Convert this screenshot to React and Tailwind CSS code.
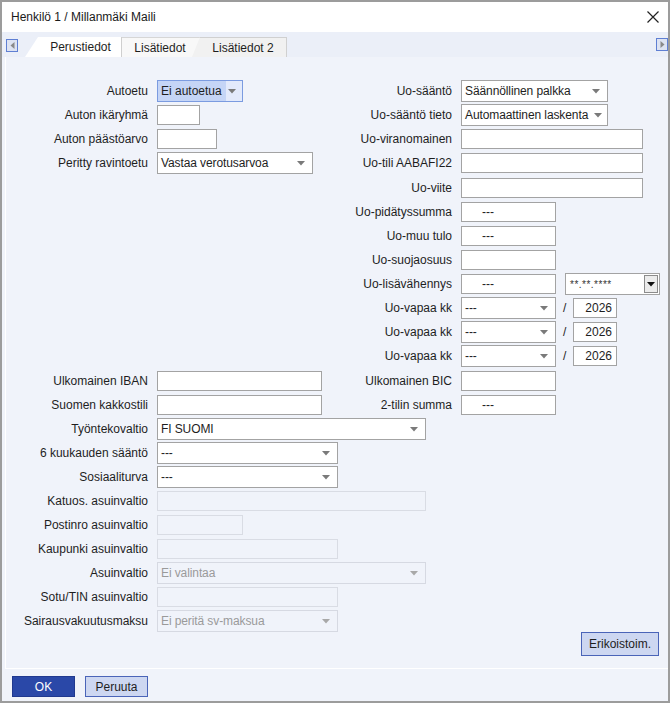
import React from "react";

function Arrow({ color = "#7a7a7a" }) {
  return (
    <svg width="8" height="5" viewBox="0 0 8 5" className="shrink-0">
      <path d="M0 0 L8 0 L4 4.5 Z" fill={color} />
    </svg>
  );
}

function Input({ w, value, pad = "pl-[3px]", right, disabled }) {
  return (
    <div
      className={
        "shrink-0 h-[20px] border flex items-center text-[12px] leading-none " +
        w +
        " " +
        (disabled ? "border-[#d9dce4] bg-[#f0f3fa] text-[#9a9a9a] " : "border-[#a3a3a3] bg-white text-[#1e1e1e] ") +
        (right ? "justify-end pr-[4px]" : pad)
      }
    >
      {value}
    </div>
  );
}

function Select({ w, value, disabled, highlight, pr = "pr-[7px]" }) {
  if (highlight) {
    return (
      <div className={"shrink-0 h-[22px] border border-[#7b9be0] bg-[#e3eafb] flex items-center " + w}>
        <div className="h-full flex items-center bg-[#c5d5f6] pl-[3px] pr-[4px] text-[12px] text-[#1e1e1e]">{value}</div>
        <div className="flex-1 flex justify-end pr-[6px]">
          <Arrow />
        </div>
      </div>
    );
  }
  return (
    <div
      className={
        "shrink-0 h-[22px] border flex items-center justify-between gap-[3px] pl-[3px] text-[12px] " +
        pr +
        " " +
        w +
        " " +
        (disabled ? "border-[#d6d9e2] bg-[#f0f3fa] text-[#9a9a9a]" : "border-[#a3a3a3] bg-white text-[#1e1e1e]")
      }
    >
      <span className="whitespace-nowrap tracking-[-0.1px]">{value}</span>
      <Arrow color={disabled ? "#a8a8a8" : "#7a7a7a"} />
    </div>
  );
}

function DateSelect() {
  return (
    <div className="shrink-0 ml-[9px] w-[95px] h-[22px] border border-[#a3a3a3] bg-white flex items-center justify-between pl-[4px] pr-[1px]">
      <span className="text-[10px] text-[#333] tracking-[0.5px]">**.**.****</span>
      <div className="w-[14px] h-[18px] border border-[#8c8c8c] bg-[#ececec] flex items-center justify-center">
        <svg width="8" height="5" viewBox="0 0 8 5">
          <path d="M0 0 L8 0 L4 4.5 Z" fill="#111" />
        </svg>
      </div>
    </div>
  );
}

function Row({ label, children, rlabel, rchildren, extra = "" }) {
  return (
    <div className={"flex h-[24px] items-center shrink-0 " + extra}>
      <div className="w-[142px] text-right whitespace-nowrap">{label}</div>
      <div className="ml-[9px] w-[183px] flex items-center">{children}</div>
      {rlabel !== undefined && (
        <>
          <div className="w-[112px] text-right whitespace-nowrap">{rlabel}</div>
          <div className="ml-[9px] flex items-center">{rchildren}</div>
        </>
      )}
    </div>
  );
}

function VapaaRow() {
  return (
    <Row
      label=""
      rlabel="Uo-vapaa kk"
      rchildren={
        <>
          <Select w="w-[95px]" value="---" />
          <span className="ml-[7px] w-[3px] text-[12px]">/</span>
          <div className="ml-[7px]">
            <Input w="w-[44px]" value="2026" right />
          </div>
        </>
      }
    />
  );
}

export default function App() {
  return (
    <div className="w-[670px] h-[703px] border-2 border-[#9c9c9c] flex flex-col bg-[#f0f3fa] font-['Liberation_Sans',Arial,sans-serif] text-[12px] text-[#1e1e1e] overflow-hidden">
      {/* Title bar */}
      <div className="h-[30px] shrink-0 bg-white flex items-center justify-between pl-[9px] pr-[9px]">
        <span className="text-[12px] text-[#1a1a1a]">Henkilö 1 / Millanmäki Maili</span>
        <svg width="12" height="12" viewBox="0 0 12 12">
          <path d="M0.5 0.5 L11.5 11.5 M11.5 0.5 L0.5 11.5" stroke="#222" strokeWidth="1.2" />
        </svg>
      </div>

      {/* Tab bar */}
      <div className="h-[25px] shrink-0 bg-[#ebeff8] flex items-end relative">
        <div className="self-center mt-[2px] ml-[4px] w-[12px] h-[13px] border border-[#5f7fd3] bg-[#dde3f2] flex items-center justify-center">
          <svg width="5" height="7" viewBox="0 0 5 7">
            <path d="M4.5 0 L4.5 7 L0.5 3.5 Z" fill="#8a8a8a" />
          </svg>
        </div>
        <div className="ml-[7px] flex items-end h-[20px]">
          <div className="relative z-20 w-[97px] h-[20px] bg-white border-r border-[#cfcfcf] [clip-path:polygon(13px_0,100%_0,100%_100%,0_100%)] flex items-center justify-center pl-[15px]">
            Perustiedot
          </div>
          <div className="relative z-10 w-[78px] h-[20px] bg-[#f8f8f8] border-t border-[#d6d6d6] [clip-path:polygon(0_0,100%_0,calc(100%-8px)_100%,0_100%)] flex items-center justify-center pr-[2px]">
            Lisätiedot
          </div>
          <div className="-ml-[8px] w-[95px] h-[20px] bg-[#f1f1f1] border-t border-r border-[#d0d0d0] flex items-center justify-center pl-[8px]">
            Lisätiedot 2
          </div>
        </div>
        <div className="absolute right-0 top-[6px] w-[12px] h-[13px] border border-[#5f7fd3] bg-[#dde3f2] flex items-center justify-center">
          <svg width="5" height="7" viewBox="0 0 5 7">
            <path d="M0.5 0 L0.5 7 L4.5 3.5 Z" fill="#8a8a8a" />
          </svg>
        </div>
      </div>

      {/* Content */}
      <div className="h-[612px] shrink-0 ml-[3px] border-l border-b border-white bg-[#f0f3fa] flex flex-col pt-[22px]">
        <Row
          label="Autoetu"
          children={<Select w="w-[86px]" value="Ei autoetua" highlight />}
          rlabel="Uo-sääntö"
          rchildren={<Select w="w-[147px]" value="Säännöllinen palkka" />}
        />
        <Row
          label="Auton ikäryhmä"
          children={<Input w="w-[43px]" />}
          rlabel="Uo-sääntö tieto"
          rchildren={<Select w="w-[147px]" value="Automaattinen laskenta" pr="pr-[5px]" />}
        />
        <Row
          label="Auton päästöarvo"
          children={<Input w="w-[60px]" />}
          rlabel="Uo-viranomainen"
          rchildren={<Input w="w-[182px]" />}
        />
        <Row
          label="Peritty ravintoetu"
          children={<Select w="w-[156px]" value="Vastaa verotusarvoa" />}
          rlabel="Uo-tili AABAFI22"
          rchildren={<Input w="w-[182px]" />}
        />
        <Row label="" extra="mt-[1px]" rlabel="Uo-viite" rchildren={<Input w="w-[182px]" />} />
        <Row label="" rlabel="Uo-pidätyssumma" rchildren={<Input w="w-[95px]" value="---" pad="pl-[20px]" />} />
        <Row label="" rlabel="Uo-muu tulo" rchildren={<Input w="w-[95px]" value="---" pad="pl-[20px]" />} />
        <Row label="" rlabel="Uo-suojaosuus" rchildren={<Input w="w-[95px]" />} />
        <Row
          label=""
          rlabel="Uo-lisävähennys"
          rchildren={
            <>
              <Input w="w-[95px]" value="---" pad="pl-[20px]" />
              <DateSelect />
            </>
          }
        />
        <VapaaRow />
        <VapaaRow />
        <VapaaRow />
        <Row
          label="Ulkomainen IBAN"
          extra="mt-[1px]"
          children={<Input w="w-[165px]" />}
          rlabel="Ulkomainen BIC"
          rchildren={<Input w="w-[95px]" />}
        />
        <Row
          label="Suomen kakkostili"
          children={<Input w="w-[165px]" />}
          rlabel="2-tilin summa"
          rchildren={<Input w="w-[95px]" value="---" pad="pl-[20px]" />}
        />
        <Row label="Työntekovaltio" children={<Select w="w-[269px]" value="FI SUOMI" />} />
        <Row label="6 kuukauden sääntö" children={<Select w="w-[181px]" value="---" />} />
        <Row label="Sosiaaliturva" children={<Select w="w-[181px]" value="---" />} />
        <Row label="Katuos. asuinvaltio" children={<Input w="w-[269px]" disabled />} />
        <Row label="Postinro asuinvaltio" children={<Input w="w-[86px]" disabled />} />
        <Row label="Kaupunki asuinvaltio" children={<Input w="w-[181px]" disabled />} />
        <Row label="Asuinvaltio" children={<Select w="w-[269px]" value="Ei valintaa" disabled />} />
        <Row label="Sotu/TIN asuinvaltio" children={<Input w="w-[181px]" disabled />} />
        <Row label="Sairausvakuutusmaksu" children={<Select w="w-[181px]" value="Ei peritä sv-maksua" disabled />} />
        <div className="flex justify-end pr-[9px] -mt-[1px]">
          <button className="w-[78px] h-[24px] border border-[#4a64b8] bg-[#cdd7f1] text-[12px] text-[#1e1e1e] flex items-center justify-center">
            Erikoistoim.
          </button>
        </div>
      </div>

      {/* Footer */}
      <div className="flex-1 flex items-start pt-[7px] pl-[10px] gap-[10px]">
        <button className="w-[63px] h-[21px] bg-[#2a48a8] border border-[#20398f] text-white text-[12px] flex items-center justify-center">
          OK
        </button>
        <button className="w-[63px] h-[21px] bg-[#cdd7f1] border border-[#4a64b8] text-[#1e1e1e] text-[12px] flex items-center justify-center">
          Peruuta
        </button>
      </div>
    </div>
  );
}
